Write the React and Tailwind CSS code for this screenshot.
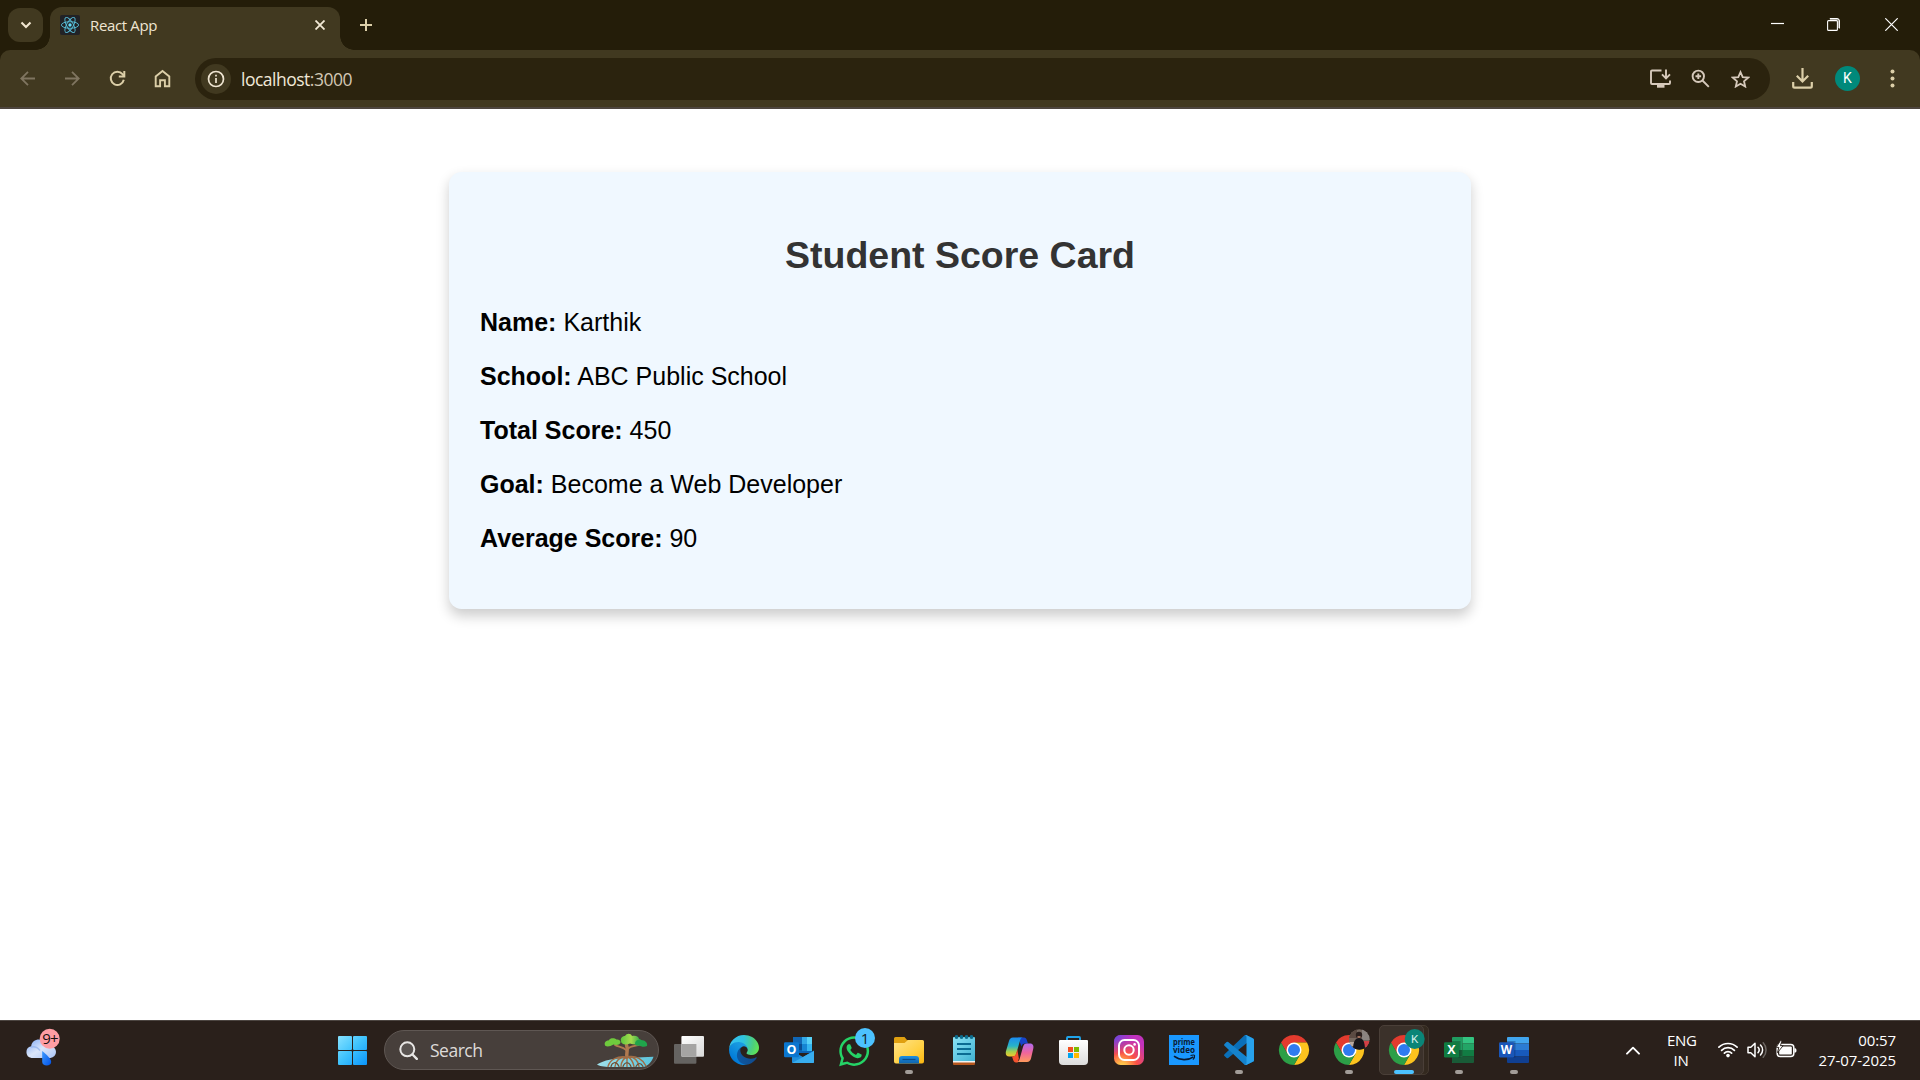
import React from "react";
import { FaWhatsapp } from "react-icons/fa";

const UI = "font-['Open_Sans','Noto_Sans',sans-serif]";

/* ---------- Browser chrome ---------- */

function ReactLogo() {
  return (
    <svg className="w-5 h-5 rounded-[2px] shrink-0" viewBox="0 0 20 20">
      <rect width="20" height="20" fill="#222327" />
      <g fill="none" stroke="#61dafb" strokeWidth="0.9" opacity="0.85">
        <ellipse cx="10" cy="10" rx="8.6" ry="3.3" />
        <ellipse cx="10" cy="10" rx="8.6" ry="3.3" transform="rotate(60 10 10)" />
        <ellipse cx="10" cy="10" rx="8.6" ry="3.3" transform="rotate(120 10 10)" />
      </g>
      <circle cx="10" cy="10" r="1.7" fill="#61dafb" />
    </svg>
  );
}

function TabStrip() {
  return (
    <div className="flex h-[50px] bg-[#241d09]">
      <button className="relative z-10 mt-2 ml-2 flex h-[34px] w-[35px] items-center justify-center rounded-[12px] bg-[#413920]">
        <svg className="w-[12px] h-[12px]" viewBox="0 0 12 12" fill="none" stroke="#f1e6d0" strokeWidth="2.1">
          <path d="M1.500 3.500 6 8l4.500-4.500" />
        </svg>
      </button>
      <div className="relative mt-[7px] ml-[7px] flex h-[43px] w-[290px] rounded-t-[12px] bg-[#413920] pl-[10px] pt-2">
        <span className="absolute bottom-0 -left-[14px] h-[14px] w-[14px] bg-[radial-gradient(circle_at_0_0,#241d09_13.5px,#413920_14px)]" />
        <span className="absolute bottom-0 -right-[14px] h-[14px] w-[14px] bg-[radial-gradient(circle_at_100%_0,#241d09_13.5px,#413920_14px)]" />
        <ReactLogo />
        <span className="ml-[10px] flex-1 text-[15px] leading-[21px] tracking-[-0.35px] text-[#efe5d2]">React App</span>
        <svg className="mr-[15px] mt-[5px] w-[10px] h-[10px]" viewBox="0 0 10 10" stroke="#f3ead6" strokeWidth="1.8">
          <path d="M.5.5l9 9M9.500.5l-9 9" />
        </svg>
      </div>
      <svg className="ml-[20px] mt-[19px] w-[12px] h-[12px]" viewBox="0 0 12 12" stroke="#dccfa8" strokeWidth="2">
        <path d="M6 0v12M0 6h12" />
      </svg>
      <div className="ml-auto flex">
        <svg className="mt-[18px] w-[13px] h-[13px]" viewBox="0 0 13 13" stroke="#fff" strokeWidth="1.2">
          <path d="M0 5.500h13" />
        </svg>
        <svg className="ml-[43px] mt-[18px] w-[13px] h-[13px]" viewBox="0 0 13 13" fill="none" stroke="#fff" strokeWidth="1.1">
          <rect x=".6" y="2.600" width="9.800" height="9.800" rx="1" />
          <path d="M2.800.6H10a2.400 2.400 0 0 1 2.400 2.400v7.500" />
          <path d="M3 1.600h6.500a2 2 0 0 1 2 2V10" strokeOpacity=".45" />
        </svg>
        <svg className="ml-[45px] mr-[22px] mt-[18px] w-[13px] h-[13px]" viewBox="0 0 13 13" stroke="#fff" strokeWidth="1.2">
          <path d="M.3.3l12.400 12.400M12.700.3.3 12.700" />
        </svg>
      </div>
    </div>
  );
}

function NavSlot({ children }) {
  return <div className="flex h-full w-[45px] shrink-0 items-center justify-center">{children}</div>;
}

function Toolbar() {
  return (
    <div className="bg-[#241d09]">
      <div className="flex h-[57px] items-center rounded-t-[10px] bg-[#413920] pl-[5px]">
        <NavSlot>
          <svg className="w-[15px] h-[15px]" viewBox="0 0 15 15" fill="none" stroke="#7f7560" strokeWidth="1.8">
            <path d="M15 7.500H1.500M8 .8 1.300 7.500 8 14.200" />
          </svg>
        </NavSlot>
        <NavSlot>
          <svg className="w-[15px] h-[15px]" viewBox="0 0 15 15" fill="none" stroke="#7f7560" strokeWidth="1.800">
            <path d="M0 7.500h13.500M7 .8l6.700 6.700L7 14.200" />
          </svg>
        </NavSlot>
        <NavSlot>
          <svg className="w-[17px] h-[17px]" viewBox="-.5 -.5 17 17" fill="none" stroke="#dccfa8" strokeWidth="2">
            <path d="M14.300 9.300A6.600 6.600 0 1 1 13 3.700L14.500 5.500" />
            <path d="M14.800.6v5.500H9.300" />
          </svg>
        </NavSlot>
        <NavSlot>
          <svg className="w-[17px] h-[19px]" viewBox="-.5 -.5 17 19" fill="none" stroke="#dccfa8" strokeWidth="1.900">
            <path d="M1.200 16.800V6.900L8 1.400l6.800 5.500v9.900h-4.400v-6H5.600v6z" />
          </svg>
        </NavSlot>
        <div className="ml-[10px] flex h-[42px] w-[1575px] items-center rounded-full bg-[#2b230e] pl-[6px] pr-[9.5px]">
          <div className="flex h-[30px] w-[30px] items-center justify-center rounded-full bg-[#413920]">
            <svg className="w-[18px] h-[18px]" viewBox="-.5 -.5 18 18" fill="none" stroke="#efe5d2">
              <circle cx="8.500" cy="8.500" r="7.500" strokeWidth="1.700" />
              <path d="M8.500 7.500v5M8.500 4.300v1.800" strokeWidth="1.700" />
            </svg>
          </div>
          <div className="ml-[10px] flex-1 text-[17.5px] leading-[24px] tracking-[-0.5px] text-[#f1e8d8]">
            localhost<span className="text-[#d3c7b4]">:3000</span>
          </div>
          <div className="flex h-full w-[40px] items-center justify-center">
            <svg className="w-[21px] h-[19px]" viewBox="0 0 21 19" fill="none" stroke="#d6c9bb" strokeWidth="1.900">
              <path d="M11.500 1.500H2a1 1 0 0 0-1 1V14a1 1 0 0 0 1 1h17a1 1 0 0 0 1-1v-2.500" />
              <path d="M7 17h7.500" strokeWidth="3.400" />
              <path d="M16 .5v8.500M12 5.300l4 4 4-4" />
            </svg>
          </div>
          <div className="flex h-full w-[40px] items-center justify-center">
            <svg className="w-[19px] h-[19px]" viewBox="-.5 -.5 19 19" fill="none" stroke="#d6c9bb" strokeWidth="1.900">
              <circle cx="6.800" cy="6.800" r="5.700" />
              <path d="M11 11l6.300 6.300M6.800 4v5.600M4 6.800h5.600" />
            </svg>
          </div>
          <div className="flex h-full w-[40px] items-center justify-center">
            <svg className="w-[19px] h-[18px]" viewBox="0 0 19 18" fill="none" stroke="#d6c9bb" strokeWidth="1.800">
              <path d="M9.500 2.100l2.200 5 5.400.5-4.100 3.600 1.200 5.300-4.700-2.800-4.700 2.800L6 11.200 1.900 7.600l5.400-.5z" />
            </svg>
          </div>
        </div>
        <div className="ml-[10px] flex h-full">
          <NavSlot>
            <svg className="w-[21px] h-[21px]" viewBox="0 0 21 21" fill="none" stroke="#dccfa8" strokeWidth="2.200">
              <path d="M10.500 0v13M4.800 7.800l5.700 5.700 5.700-5.700M1.200 14v4.200c0 .8.6 1.400 1.400 1.400h15.800c.8 0 1.400-.6 1.400-1.400V14" />
            </svg>
          </NavSlot>
          <NavSlot>
            <div className="flex h-[25px] w-[25px] items-center justify-center rounded-full bg-[#00897b] text-[14px] leading-[25px] text-white font-[Roboto,sans-serif]">
              K
            </div>
          </NavSlot>
          <NavSlot>
            <svg className="w-[5px] h-[19px]" viewBox="-.5 -.5 5 19" fill="#dccfa8">
              <circle cx="2" cy="2" r="2" />
              <circle cx="2" cy="9" r="2" />
              <circle cx="2" cy="16" r="2" />
            </svg>
          </NavSlot>
        </div>
      </div>
      <div className="h-[2px] bg-[#4d453e]" />
    </div>
  );
}

/* ---------- Page ---------- */

const ROWS = [
  ["Name:", "Karthik"],
  ["School:", "ABC Public School"],
  ["Total Score:", "450"],
  ["Goal:", "Become a Web Developer"],
  ["Average Score:", "90"],
];

function ScoreCard() {
  return (
    <main className="flex-1 bg-white pt-[62.5px] font-['Liberation_Sans',Arial,sans-serif]">
      <section className="mx-auto h-[437px] w-[1022.5px] rounded-[12.5px] bg-[#f0f8ff] px-[31.25px] pt-[62px] shadow-[0_6.25px_12.5px_rgba(0,0,0,0.2)]">
        <h2 className="text-center text-[37.5px] font-bold leading-[43px] text-[#333]">Student Score Card</h2>
        <div className="mt-[31.5px] flex flex-col gap-[25px]">
          {ROWS.map(([label, value]) => (
            <p key={label} className="text-[25px] leading-[29px] text-black">
              <strong>{label}</strong> {value}
            </p>
          ))}
        </div>
      </section>
    </main>
  );
}

/* ---------- Taskbar icons ---------- */

const ICON = "block h-[30px] w-[30px] overflow-visible";

function Weather() {
  return (
    <svg className="block w-[36px] h-[38px]" viewBox="0 0 36 38">
      <defs>
        <linearGradient id="cloud" x1="0" y1="0" x2="1" y2="1">
          <stop offset="0" stopColor="#7fa9f5" />
          <stop offset=".5" stopColor="#dbe6fa" />
          <stop offset="1" stopColor="#a9c3f5" />
        </linearGradient>
        <linearGradient id="drop" x1="0" y1="0" x2="1" y2="1">
          <stop offset="0" stopColor="#3f9bff" />
          <stop offset="1" stopColor="#0050e6" />
        </linearGradient>
      </defs>
      <path d="M6.500 30a6 6 0 0 1-.3-11.800C6.500 14 10 11.500 14 11.500c4 0 7.500 2.500 8.500 6.500C27 17 31 20 31 24a6 6 0 0 1-5.500 6z" fill="url(#cloud)" />
      <path d="M6 19c4-.8 7 .8 9 3.500" stroke="#8fb0ee" fill="none" strokeWidth="1.500" opacity=".7" />
      <path d="M17.200 23c5 4 9 8 9 11 0 2-2 3.600-4.500 3.600s-4.500-1.600-4.500-3.600z" fill="url(#drop)" />
      <circle cx="24.700" cy="10.700" r="10" fill="#ff9da4" />
      <text x="25" y="16" textAnchor="middle" fontSize="15" letterSpacing="-.8" fontFamily="Open Sans" fill="#1a1010">9+</text>
    </svg>
  );
}

function Start() {
  return (
    <svg className={ICON} viewBox="0 0 30 30">
      <defs>
        <linearGradient id="win" gradientUnits="userSpaceOnUse" x1="0" y1="0" x2="30" y2="30">
          <stop offset="0" stopColor="#8ce4ff" />
          <stop offset=".5" stopColor="#3fc3fd" />
          <stop offset="1" stopColor="#0a94fb" />
        </linearGradient>
      </defs>
      <g fill="url(#win)">
        <rect x="1" y="1" width="14" height="14" rx="1" />
        <rect x="16" y="1" width="14" height="14" rx="1" />
        <rect x="1" y="16" width="14" height="14" rx="1" />
        <rect x="16" y="16" width="14" height="14" rx="1" />
      </g>
    </svg>
  );
}

function Mangrove() {
  return (
    <svg className="block w-[58px] h-[34px]" viewBox="0 0 58 34">
      <defs>
        <linearGradient id="leaf" x1="0" y1="0" x2="1" y2="0">
          <stop offset="0" stopColor="#5fc63d" />
          <stop offset=".5" stopColor="#a6dc4e" />
          <stop offset="1" stopColor="#1fa04a" />
        </linearGradient>
        <linearGradient id="water" x1="0" y1="0" x2="1" y2="0">
          <stop offset="0" stopColor="#9fe0ea" />
          <stop offset="1" stopColor="#5cc4dc" />
        </linearGradient>
      </defs>
      <path d="M1 31.500C8 27 18 25.500 30 25l27.500-1.200C56 29 52 32.500 48 34H14C8 34 3 33 1 31.500z" fill="url(#water)" />
      <g fill="none" stroke="#8f5f3c" strokeLinecap="round">
        <path d="M31 24c-1-4 1.500-8-.5-12" strokeWidth="3.500" stroke="#b0794f" />
        <path d="M30 17c-3-3.500-8-3-11-5M32 15.500c3-3 8-2 12-4M31 12V8" strokeWidth="1.800" stroke="#b0794f" />
        <path d="M30 24c-8-1-16 2-18 9.500M30 24c-6 0-10 3-11 9.500M31 24c-4 2-6 5-6 9.500M31 24v9.500M32 24c4 2 5 5 6 9.500M33 24c6 0 9 4 10 9.500M33 23.500c7-1 14 3 17 9.500" strokeWidth="1.400" stroke="#a06c45" />
        <path d="M15 33.500c1-4 5-6 8 0M27 33.500c2-5 6-5 8 0M40 33.500c2-4 5-4 7 0" strokeWidth="1.200" stroke="#6f4a30" />
      </g>
      <path d="M9.500 13c-2-3 0-5.500 3-5.500 2-3 6-2.500 8-1 2-.5 4 1 4 2.500 0 3-4 3.500-7 2.500-3 2-6 2.500-8 1.500z" fill="#6fca3d" />
      <path d="M25 8c-1-3 2-5 4-5 2-3.500 6-2.500 7 0 4-1 7 1 7 3 3 0 3 4 1 5-4 1-7 .5-10-.5-5 2-9 .5-9-2.500z" fill="url(#leaf)" />
      <path d="M39 10.500c0-3 3-4.500 6-3.500 4 0 7 3 6 6-3 1.500-6 .5-8-.5-2 .5-4 0-4-2z" fill="#20a54b" />
    </svg>
  );
}

function TaskView() {
  return (
    <svg className={ICON} viewBox="0 0 30 30">
      <defs>
        <linearGradient id="tv" x1="0" y1="0" x2="1" y2="1">
          <stop offset="0" stopColor="#fff" />
          <stop offset="1" stopColor="#d8d8d8" />
        </linearGradient>
      </defs>
      <rect x="0" y="9" width="22.400" height="19.700" rx="1" fill="#656361" />
      <rect x="7.400" y="1" width="22.600" height="20.700" rx="1" fill="url(#tv)" />
      <path d="M7.400 9h15v12.700h-14a1 1 0 0 1-1-1z" fill="#a5a4a3" />
    </svg>
  );
}

function Edge() {
  return (
    <svg className={ICON} viewBox="0 0 256 256">
      <defs>
        <linearGradient id="ea" x1="63" y1="178" x2="241" y2="178" gradientUnits="userSpaceOnUse">
          <stop offset="0" stopColor="#0c59a4" />
          <stop offset="1" stopColor="#114a8b" />
        </linearGradient>
        <linearGradient id="eb" x1="153" y1="100" x2="46" y2="228" gradientUnits="userSpaceOnUse">
          <stop offset="0" stopColor="#1b9de2" />
          <stop offset=".3" stopColor="#1595df" />
          <stop offset="1" stopColor="#0078d7" />
        </linearGradient>
        <radialGradient id="ec" cx="26" cy="45" r="250" gradientUnits="userSpaceOnUse">
          <stop offset="0" stopColor="#35c1f1" />
          <stop offset=".4" stopColor="#2fc3df" />
          <stop offset=".75" stopColor="#4ed07a" />
          <stop offset="1" stopColor="#66eb4a" />
        </radialGradient>
      </defs>
      <g transform="translate(-4.630 -4.920)">
        <path fill="url(#ea)" d="M235.680 195.460a93.730 93.730 0 0 1-10.540 4.710 101.870 101.870 0 0 1-35.900 6.460c-47.320 0-88.540-32.550-88.540-74.320A31.480 31.480 0 0 1 117.130 105c-42.800 1.800-53.800 46.400-53.800 72.530 0 73.880 68.090 81.370 82.760 81.370 7.910 0 19.840-2.300 27-4.560l1.310-.44a128.340 128.340 0 0 0 66.600-52.800 4 4 0 0 0-5.320-5.640z" />
        <path fill="url(#eb)" d="M110.340 246.340A79.200 79.200 0 0 1 87.600 225a80.720 80.720 0 0 1 29.530-120c3.120-1.470 8.450-4.130 15.540-4a32.350 32.350 0 0 1 25.690 13 31.880 31.880 0 0 1 6.360 18.660c0-.21 24.460-79.600-80-79.600-43.900 0-80 41.660-80 78.210a130.150 130.150 0 0 0 12.110 56 128 128 0 0 0 156.380 67.110 75.550 75.550 0 0 1-62.780-8z" />
      </g>
      <path fill="url(#ec)" d="M152.300 148.900c-.8 1-3.300 2.500-3.300 5.700 0 2.600 1.700 5.100 4.700 7.200 14.400 10 41.500 8.700 41.600 8.700a59.600 59.600 0 0 0 30.300-8.400A61.400 61.400 0 0 0 256 109.200c.300-22.400-8-37.300-11.300-43.900C223.500 23.800 177.700 0 128 0A128 128 0 0 0 0 126.200c.5-36.500 36.800-66 80-66 3.500 0 23.500.3 42 10 16.300 8.600 24.900 18.900 30.900 29.200 6.200 10.700 7.300 24.200 7.300 29.600s-2.800 13.300-7.900 19.900z" />
    </svg>
  );
}

function Outlook() {
  return (
    <svg className={ICON} viewBox="0 0 30 30">
      <path d="M9 2h19v16H9z" fill="#0a63b5" />
      <path d="M9 2.500A.5.5 0 0 1 9.500 2H18v7H9z" fill="#1066b5" />
      <path d="M18 2h5v7h-5z" fill="#32a9e7" />
      <path d="M23 2h5v7h-5z" fill="#58d2f8" />
      <path d="M9 9h9v6H9z" fill="#0a4d92" />
      <path d="M18 9h5v7h-5z" fill="#1585d3" />
      <path d="M23 9h5v7h-5z" fill="#35b6f1" />
      <path d="M30 15.500V27a1 1 0 0 1-1 1H9a1 1 0 0 1-1-1V16l11 6z" fill="#1f8fdc" />
      <path d="M8 28l22-12v11a1 1 0 0 1-1 1z" fill="#38adee" />
      <rect x="0" y="7.300" width="15" height="15" rx="1.200" fill="#0b76cf" />
      <text x="7.500" y="19.200" textAnchor="middle" fontSize="12.500" fontWeight="700" fontFamily="Open Sans" fill="#fff">O</text>
    </svg>
  );
}

function WhatsApp() {
  return (
    <div className="relative h-[30px] w-[30px]">
      <FaWhatsapp className="-ml-[2.100px] -mt-[2.100px] h-[34.300px] w-[34.300px] text-[#25d366]" />
      <span className="absolute -top-[6px] left-[16px] flex h-5 w-5 items-center justify-center rounded-full bg-[#4cc2ff] text-[15px] leading-[20px] text-[#14202a]">
        1
      </span>
    </div>
  );
}

function Explorer() {
  return (
    <svg className={ICON} viewBox="0 0 30 30">
      <defs>
        <linearGradient id="fold" x1="0" y1="0" x2="1" y2="1">
          <stop offset="0" stopColor="#ffe38a" />
          <stop offset=".6" stopColor="#ffd042" />
          <stop offset="1" stopColor="#fbb50f" />
        </linearGradient>
        <linearGradient id="foldb" x1="0" y1="0" x2="0" y2="1">
          <stop offset="0" stopColor="#1c8fe0" />
          <stop offset="1" stopColor="#0f63ad" />
        </linearGradient>
      </defs>
      <path d="M0 3.500A1.500 1.500 0 0 1 1.500 2h9L13 5h6v6H0z" fill="#e0a010" />
      <path d="M0 8h10.500L14 5h14.500A1.500 1.500 0 0 1 30 6.500v20a2 2 0 0 1-2 2H2a2 2 0 0 1-2-2z" fill="url(#fold)" />
      <path d="M5 28.500V24a3 3 0 0 1 3-3h14a3 3 0 0 1 3 3v4.500z" fill="url(#foldb)" />
      <path d="M8.500 24.500h13" stroke="#0b4c8a" strokeWidth="1.200" />
    </svg>
  );
}

function Notepad() {
  return (
    <svg className={ICON} viewBox="0 0 30 30">
      <defs>
        <linearGradient id="np" x1="0" y1="0" x2="1" y2="1">
          <stop offset="0" stopColor="#8be3f5" />
          <stop offset="1" stopColor="#40b2d2" />
        </linearGradient>
      </defs>
      <path d="M4 25h22v4a1 1 0 0 1-1 1H5a1 1 0 0 1-1-1z" fill="#b5561d" />
      <path d="M4 25h22v2.500H4z" fill="#f1f1f1" />
      <path d="M4 3a1 1 0 0 1 1-1h20a1 1 0 0 1 1 1v23H4z" fill="url(#np)" />
      <path d="M8 9h14M8 14h14M8 19h14" stroke="#0b6b92" strokeWidth="1.800" />
      <g fill="#0d6d8e">
        <circle cx="7.500" cy="2" r="1.900" />
        <circle cx="12.500" cy="2" r="1.900" />
        <circle cx="17.500" cy="2" r="1.900" />
        <circle cx="22.500" cy="2" r="1.900" />
      </g>
    </svg>
  );
}

function Copilot() {
  return (
    <svg className={ICON} viewBox="0 0 30 30">
      <defs>
        <linearGradient id="cl" x1="0" y1="0" x2="0" y2="1">
          <stop offset="0" stopColor="#1b8cf0" />
          <stop offset=".45" stopColor="#28b3c8" />
          <stop offset=".75" stopColor="#a7d24a" />
          <stop offset="1" stopColor="#f5c52c" />
        </linearGradient>
        <linearGradient id="cr" x1="0" y1="0" x2="0" y2="1">
          <stop offset="0" stopColor="#b06af0" />
          <stop offset=".5" stopColor="#f0659c" />
          <stop offset="1" stopColor="#ff9a5c" />
        </linearGradient>
      </defs>
      <g transform="translate(1 0)">
        <path d="M13 2.500h6c1.600 0 2.300 1 2.800 2.500L23 8.500h-3c-2 0-3 1-3.500 3z" fill="#1743c9" />
        <path d="M8 2.500h10c-1.600 0-2.400 1-3 3L11.500 18c-.7 2.500-1.600 3.500-4 3.500H4.200C1 21.500.3 19 1 16L4 6c.7-2.200 1.800-3.500 4-3.500z" fill="url(#cl)" />
        <path d="M7 21.500c2.600 0 3.600-1 4.300-3.500l1-3.500 1.600 9-1.200 4H11c-1.600 0-2.300-1-2.800-2.500z" fill="#f4522f" />
        <path d="M22 27H11.500c1.600 0 2.500-1 3.100-3L18 12c.7-2.500 1.600-3.500 4-3.500h3c3.200 0 4 2.500 3.200 5.500L26 23.500C25.300 25.700 24.200 27 22 27z" fill="url(#cr)" />
      </g>
    </svg>
  );
}

function Store() {
  return (
    <svg className={ICON} viewBox="0 0 30 30">
      <defs>
        <linearGradient id="bag" x1="0" y1="0" x2="0" y2="1">
          <stop offset="0" stopColor="#fff" />
          <stop offset="1" stopColor="#dcdcdc" />
        </linearGradient>
      </defs>
      <path d="M8 6.500V2.900c0-.6.300-.9.900-.9h11.200c.6 0 .9.300.900.900v3.600" fill="none" stroke="#20a4ea" strokeWidth="1.900" />
      <path d="M0 6a1 1 0 0 1 1-1h27a1 1 0 0 1 1 1v20a4 4 0 0 1-4 4H4a4 4 0 0 1-4-4z" fill="url(#bag)" />
      <path d="M9 12h5v5H9z" fill="#f25022" />
      <path d="M15 12h5v5h-5z" fill="#7fba00" />
      <path d="M9 18h5v5H9z" fill="#00a4ef" />
      <path d="M15 18h5v5h-5z" fill="#ffb900" />
    </svg>
  );
}

function Instagram() {
  return (
    <svg className={ICON} viewBox="0 0 30 30">
      <defs>
        <radialGradient id="ig1" cx=".27" cy="1.080" r="1">
          <stop offset="0" stopColor="#ffd65a" />
          <stop offset=".15" stopColor="#ffc04a" />
          <stop offset=".5" stopColor="#fb5245" />
          <stop offset="1" stopColor="#c232bd" />
        </radialGradient>
        <radialGradient id="ig2" cx="0" cy="0" r=".7">
          <stop offset="0" stopColor="#5a4fe0" />
          <stop offset="1" stopColor="#9032d0" stopOpacity="0" />
        </radialGradient>
      </defs>
      <rect width="30" height="30" rx="6.500" fill="url(#ig1)" />
      <rect width="30" height="30" rx="6.500" fill="url(#ig2)" />
      <g fill="none" stroke="#fff" strokeWidth="2">
        <rect x="5" y="5" width="20" height="20" rx="5.500" />
        <circle cx="15" cy="15" r="4.700" />
      </g>
      <circle cx="20.600" cy="9.400" r="1.300" fill="#fff" />
    </svg>
  );
}

function PrimeVideo() {
  return (
    <svg className={ICON} viewBox="0 0 30 30">
      <rect width="30" height="30" fill="#1a98ff" />
      <g fontFamily="Open Sans" fontWeight="700" fontSize="8.400" fill="#0b1a30" textAnchor="middle">
        <text x="15" y="10.200" textLength="22" lengthAdjust="spacingAndGlyphs">prime</text>
        <text x="15" y="18.400" textLength="22" lengthAdjust="spacingAndGlyphs">video</text>
      </g>
      <path d="M5 21.200c6 4.500 14 4.500 19.500.6" fill="none" stroke="#0b1a30" strokeWidth="1.600" />
      <path d="M21.500 20.600c1.800-.6 3.800-.6 4.100 0 .2.700-.5 2.700-1.700 4" fill="none" stroke="#0b1a30" strokeWidth="1.100" />
    </svg>
  );
}

function VSCode() {
  return (
    <svg className={ICON} viewBox="0 0 30 30">
      <path d="M22 0l7 3.200a1.700 1.700 0 0 1 1 1.600L22.500 8.200 4.200 23a1.300 1.300 0 0 1-1.600 0L.5 21a1.200 1.200 0 0 1 0-1.800L20.300.6A1.700 1.700 0 0 1 22 0z" fill="#0a6fb8" />
      <path d="M22 30l7-3.200a1.700 1.700 0 0 0 1-1.600l-7.500-3.400L4.200 7a1.300 1.300 0 0 0-1.600 0L.5 9a1.200 1.200 0 0 0 0 1.800l19.800 18.600a1.700 1.700 0 0 0 1.700.6z" fill="#1583cd" />
      <path d="M22.200 29.900a1.800 1.800 0 0 1-2-.4c.8.7 2.300.1 2.300-1.200V1.700C22.500.5 21-.2 20.200.5a1.800 1.800 0 0 1 2-.4l6.800 3.300a1.700 1.700 0 0 1 1 1.600v20a1.700 1.700 0 0 1-1 1.600z" fill="#28a2ec" />
    </svg>
  );
}

function Chrome({ children }) {
  return (
    <svg className={ICON} viewBox="0 0 30 30">
      <path d="M2 7.500A15 15 0 0 1 28 7.500H15L8.500 18.750z" fill="#e33b2e" />
      <path d="M28 7.500A15 15 0 0 1 15 30l6.500-11.250L15 7.500z" fill="#fcc31e" />
      <path d="M15 30A15 15 0 0 1 2 7.500l6.500 11.250h13z" fill="#2c9f47" />
      <circle cx="15" cy="15" r="7.500" fill="#fff" />
      <circle cx="15" cy="15" r="6" fill="#2f7bf0" />
      {children}
    </svg>
  );
}

function PhotoBadge() {
  return (
    <g>
      <defs>
        <clipPath id="ph">
          <circle cx="25.300" cy="4.500" r="10.300" />
        </clipPath>
      </defs>
      <g clipPath="url(#ph)">
        <rect x="14" y="-6" width="22" height="22" fill="#76685f" />
        <path d="M14-6h9v9h-9z" fill="#5b4a42" />
        <path d="M28-6h8V5h-8z" fill="#8b8480" />
        <path d="M30 6h6v6h-6z" fill="#d23f45" />
        <path d="M14 7h6v4h-6z" fill="#b9a9a0" />
        <path d="M19 15c0-8 2-12 6-12s6 4 6 12z" fill="#17151a" />
        <circle cx="25" cy="0" r="3.200" fill="#2a1e1c" />
        <path d="M23.500 1h3v2h-3z" fill="#a06f5c" />
      </g>
    </g>
  );
}

function Excel() {
  return (
    <svg className={ICON} viewBox="0 0 30 30">
      <path d="M8 3a1 1 0 0 1 1-1h9.500v26H9a1 1 0 0 1-1-1z" fill="#1f9c60" />
      <path d="M18.500 2H29a1 1 0 0 1 1 1v5.500H18.500z" fill="#33c481" />
      <path d="M18.500 8.500H30V15H18.500z" fill="#23a566" />
      <path d="M8 15h10.500v6.500H8z" fill="#185c37" />
      <path d="M18.500 15H30v6.500H18.500z" fill="#117c43" />
      <path d="M8 21.500h22V27a1 1 0 0 1-1 1H9a1 1 0 0 1-1-1z" fill="#195b37" />
      <path d="M8 6h8.500v17H8z" fill="#0f4327" opacity=".4" />
      <rect x="0" y="7.300" width="15" height="15.200" rx="1.200" fill="#107c41" />
      <text x="7.500" y="19.300" textAnchor="middle" fontSize="12.500" fontWeight="700" fontFamily="Open Sans" fill="#fff">X</text>
    </svg>
  );
}

function Word() {
  return (
    <svg className={ICON} viewBox="0 0 30 30">
      <path d="M8 8.500V3a1 1 0 0 1 1-1h20a1 1 0 0 1 1 1v5.500z" fill="#41a5ee" />
      <path d="M8 8.500h22V15H8z" fill="#2b7cd3" />
      <path d="M8 15h22v6.500H8z" fill="#185abd" />
      <path d="M8 21.500h22V27a1 1 0 0 1-1 1H9a1 1 0 0 1-1-1z" fill="#103f91" />
      <path d="M8 6h8.500v17H8z" fill="#0c2c66" opacity=".35" />
      <rect x="0" y="7.300" width="15" height="15.200" rx="1.200" fill="#1a56b8" />
      <text x="7.500" y="19.200" textAnchor="middle" fontSize="11.800" fontWeight="700" fontFamily="Open Sans" fill="#fff">W</text>
    </svg>
  );
}

/* ---------- Taskbar ---------- */

function Slot({ children, running, active }) {
  return (
    <div className="relative flex h-[50px] w-[55px] shrink-0 items-center justify-center">
      {active && (
        <>
          <span className="absolute inset-y-0 left-[10px] w-[42.500px] rounded-[5px] border border-[#43382f] bg-[#33291f]" />
          <span className="absolute inset-y-0 left-[2.500px] w-[44.500px] rounded-[5px] border border-[#4a3f38] bg-[#3b312a]" />
        </>
      )}
      <div className="relative">{children}</div>
      {running && <span className="absolute bottom-[1px] h-[4px] w-[8px] rounded-full bg-[#a29c98]" />}
      {active && <span className="absolute bottom-[1px] h-[4px] w-[20px] rounded-full bg-[#4cc2ff]" />}
    </div>
  );
}

function Tray() {
  return (
    <div className="ml-auto flex items-center text-[15px] leading-[20px] text-white">
      <svg className="mr-[27px] w-[14px] h-[9px]" viewBox="0 0 14 9" fill="none" stroke="#fff" strokeWidth="1.900" strokeLinecap="round" strokeLinejoin="round">
        <path d="M1 7.700l6-6 6 6" />
      </svg>
      <div className="w-[28px] whitespace-nowrap text-center tracking-[-0.300px]">
        <div>ENG</div>
        <div>IN</div>
      </div>
      <svg className="ml-[23px] w-[20px] h-[16px]" viewBox="0 0 20 16" fill="none" stroke="#fff" strokeWidth="1.700" strokeLinecap="round">
        <path d="M.9 5.200a13 13 0 0 1 18.200 0M3.600 8.300a9 9 0 0 1 12.800 0M6.400 11.200a5 5 0 0 1 7.200 0" />
        <circle cx="10" cy="13.600" r="1.800" fill="#fff" stroke="none" />
      </svg>
      <svg className="ml-[9px] w-[20px] h-[18px]" viewBox="0 0 20 18" fill="none" stroke="#fff" strokeWidth="1.500" strokeLinecap="round" strokeLinejoin="round">
        <path d="M1 6.300h2.800L8 2.300v13.400l-4.200-4H1z" />
        <path d="M11 6.300a4 4 0 0 1 0 5.400M13.500 4a7 7 0 0 1 0 10" />
        <path d="M16.200 1.800a10.500 10.500 0 0 1 0 14.400" stroke="#6d6763" />
      </svg>
      <svg className="ml-[9px] w-[21px] h-[18px] overflow-visible" viewBox="0 0 21 18">
        <rect x="1.200" y="3.400" width="16.600" height="12.200" rx="3" fill="none" stroke="#fff" strokeWidth="1.500" />
        <rect x="3.200" y="5.400" width="12.600" height="8.200" rx="1.200" fill="#fff" />
        <path d="M18.400 7.300v4.400c1.400 0 2.100-.6 2.100-2.200s-.7-2.200-2.100-2.200z" fill="#fff" />
        <path d="M4.500-.6L.2 6.400h2.600L1.500 11.600l5.600-6.900H4.400L6-.3z" fill="#fff" stroke="#2a201b" strokeWidth=".9" />
      </svg>
      <div className="ml-[20px] mr-6 w-[79px] whitespace-nowrap text-right tracking-[-0.080px]">
        <div>00:57</div>
        <div>27-07-2025</div>
      </div>
    </div>
  );
}

function Taskbar() {
  return (
    <footer className="flex h-[60px] items-center border-t border-[#4c4541] bg-[#2a201b] pb-px">
      <div className="-mt-[6px] ml-[25px] w-[36px]">
        <Weather />
      </div>
      <div className="ml-[263.500px] flex items-center">
        <Slot><Start /></Slot>
        <div className="ml-[4.500px] mr-[2.500px] flex h-[40px] w-[275px] items-center overflow-hidden rounded-full border border-[#5f5753] bg-[#473f3b] pl-[14px] pr-[4px]">
          <svg className="w-[19px] h-[19px]" viewBox="0 0 19 19" fill="none" stroke="#e8e6e4" strokeLinecap="round">
            <circle cx="8.300" cy="8.300" r="7" strokeWidth="2" fill="#5a5451" />
            <path d="M13.500 13.500l4.300 4.300" strokeWidth="2.400" />
          </svg>
          <span className="ml-[12px] flex-1 text-[17.500px] leading-[24px] tracking-[-0.500px] text-[#dedbd9]">Search</span>
          <Mangrove />
        </div>
        <Slot><TaskView /></Slot>
        <Slot><Edge /></Slot>
        <Slot><Outlook /></Slot>
        <Slot><WhatsApp /></Slot>
        <Slot running><Explorer /></Slot>
        <Slot><Notepad /></Slot>
        <Slot><Copilot /></Slot>
        <Slot><Store /></Slot>
        <Slot><Instagram /></Slot>
        <Slot><PrimeVideo /></Slot>
        <Slot running><VSCode /></Slot>
        <Slot><Chrome /></Slot>
        <Slot running><Chrome><PhotoBadge /></Chrome></Slot>
        <Slot active>
          <Chrome>
            <circle cx="25.700" cy="4" r="10" fill="#0a8577" />
            <text x="25.700" y="8" textAnchor="middle" fontSize="11.500" fontFamily="Roboto" fill="#d5efeb">K</text>
          </Chrome>
        </Slot>
        <Slot running><Excel /></Slot>
        <Slot running><Word /></Slot>
      </div>
      <Tray />
    </footer>
  );
}

export default function App() {
  return (
    <div className={`flex h-[1080px] w-[1920px] flex-col overflow-hidden bg-white ${UI}`}>
      <TabStrip />
      <Toolbar />
      <ScoreCard />
      <Taskbar />
    </div>
  );
}
